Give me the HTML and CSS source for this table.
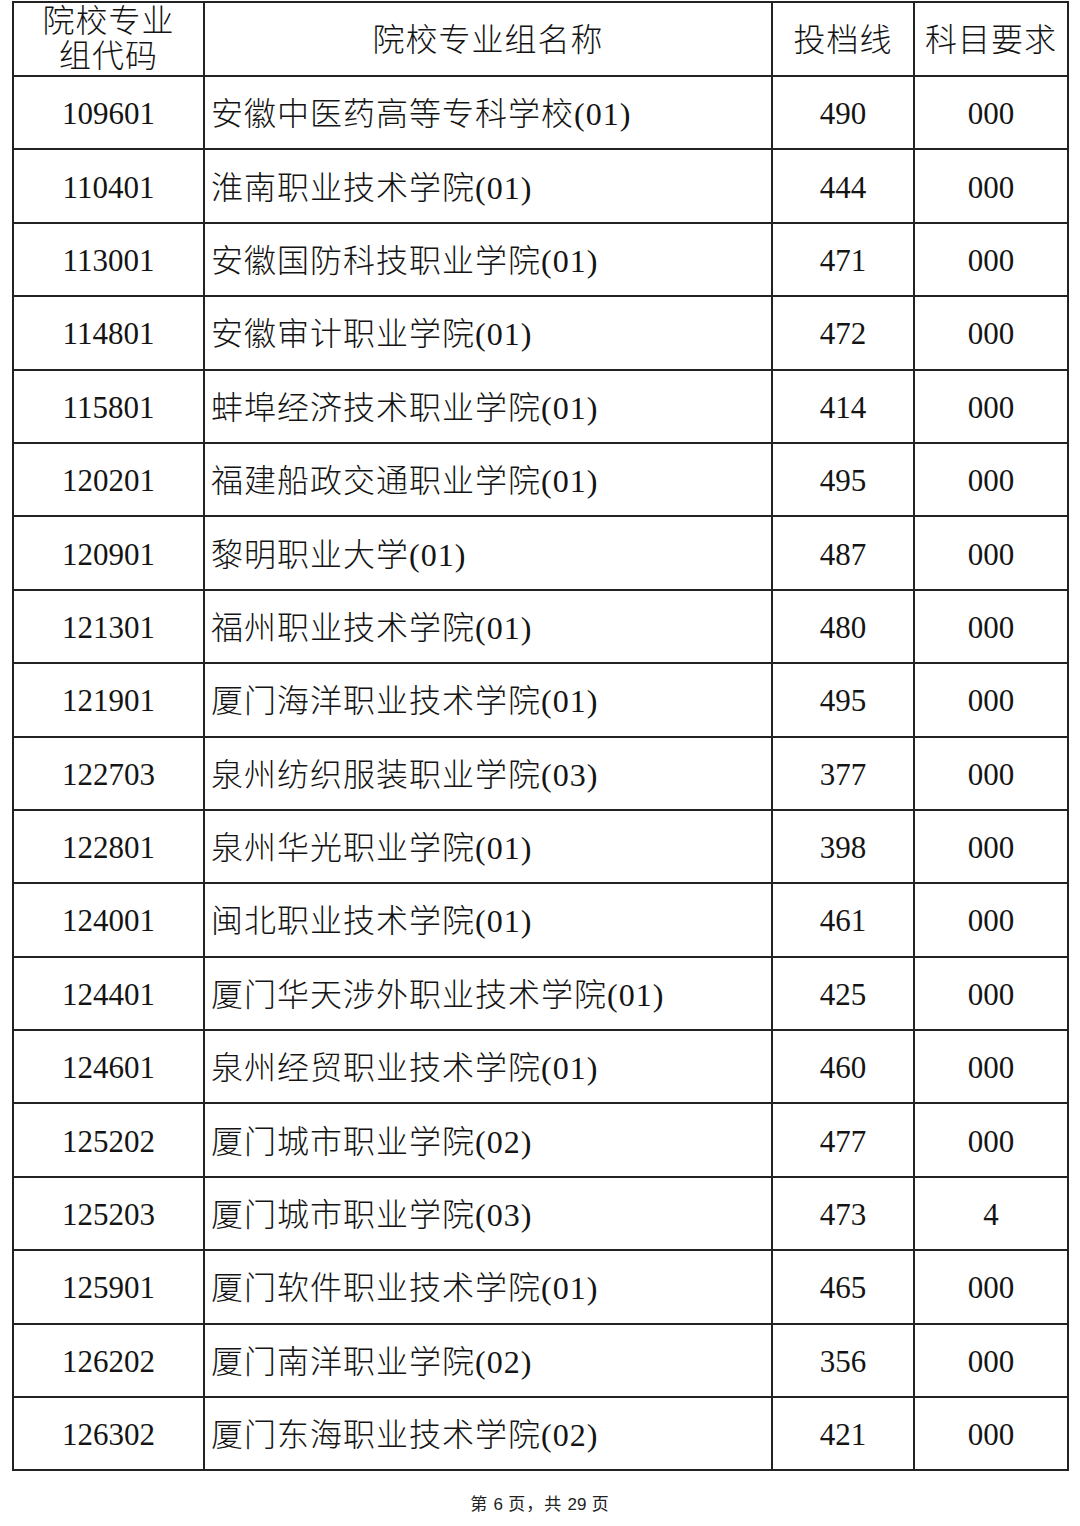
FILE: index.html
```html
<!DOCTYPE html>
<html lang="zh-CN">
<head>
<meta charset="utf-8">
<title>院校专业组投档线</title>
<link rel="stylesheet" href="styles.css">
</head>
<body>
<div class="page">
<table class="grid">
<colgroup>
<col class="c-code"><col class="c-name"><col class="c-score"><col class="c-req">
</colgroup>
<thead>
<tr class="head">
<th class="code-head"><span class="two-line">院校专业<br>组代码</span></th>
<th>院校专业组名称</th>
<th>投档线</th>
<th>科目要求</th>
</tr>
</thead>
<tbody>
<tr><td>109601</td><td class="name">安徽中医药高等专科学校(01)</td><td>490</td><td>000</td></tr>
<tr><td>110401</td><td class="name">淮南职业技术学院(01)</td><td>444</td><td>000</td></tr>
<tr><td>113001</td><td class="name">安徽国防科技职业学院(01)</td><td>471</td><td>000</td></tr>
<tr><td>114801</td><td class="name">安徽审计职业学院(01)</td><td>472</td><td>000</td></tr>
<tr><td>115801</td><td class="name">蚌埠经济技术职业学院(01)</td><td>414</td><td>000</td></tr>
<tr><td>120201</td><td class="name">福建船政交通职业学院(01)</td><td>495</td><td>000</td></tr>
<tr><td>120901</td><td class="name">黎明职业大学(01)</td><td>487</td><td>000</td></tr>
<tr><td>121301</td><td class="name">福州职业技术学院(01)</td><td>480</td><td>000</td></tr>
<tr><td>121901</td><td class="name">厦门海洋职业技术学院(01)</td><td>495</td><td>000</td></tr>
<tr><td>122703</td><td class="name">泉州纺织服装职业学院(03)</td><td>377</td><td>000</td></tr>
<tr><td>122801</td><td class="name">泉州华光职业学院(01)</td><td>398</td><td>000</td></tr>
<tr><td>124001</td><td class="name">闽北职业技术学院(01)</td><td>461</td><td>000</td></tr>
<tr><td>124401</td><td class="name">厦门华天涉外职业技术学院(01)</td><td>425</td><td>000</td></tr>
<tr><td>124601</td><td class="name">泉州经贸职业技术学院(01)</td><td>460</td><td>000</td></tr>
<tr><td>125202</td><td class="name">厦门城市职业学院(02)</td><td>477</td><td>000</td></tr>
<tr><td>125203</td><td class="name">厦门城市职业学院(03)</td><td>473</td><td>4</td></tr>
<tr><td>125901</td><td class="name">厦门软件职业技术学院(01)</td><td>465</td><td>000</td></tr>
<tr><td>126202</td><td class="name">厦门南洋职业学院(02)</td><td>356</td><td>000</td></tr>
<tr><td>126302</td><td class="name">厦门东海职业技术学院(02)</td><td>421</td><td>000</td></tr>
</tbody>
</table>
<p class="footer">第 <span class="num">6</span> 页，共 <span class="num">29</span> 页</p>
</div>
</body>
</html>
```
FILE: styles.css
```css
html, body {
  margin: 0;
  padding: 0;
  background: #ffffff;
}

.page {
  width: 1080px;
  height: 1526px;
  padding: 1px 0 0 12px;
  box-sizing: border-box;
  font-family: "Liberation Serif", "Noto Sans CJK SC", serif;
  font-weight: 300;
  color: #141414;
}

.grid {
  border-collapse: collapse;
  table-layout: fixed;
  width: 1055px;
}

.c-code { width: 191px; }
.c-name { width: 568px; }
.c-score { width: 142px; }
.c-req { width: 154px; }

.grid th,
.grid td {
  border: 2px solid #222222;
  padding: 3px 0 0 0;
  text-align: center;
  vertical-align: middle;
  font-size: 31px;
  font-weight: 300;
  line-height: 36px;
  white-space: nowrap;
  overflow: hidden;
}

.grid th {
  font-size: 32px;
  letter-spacing: 1px;
}

.head {
  height: 74px;
}

.head th {
  padding-top: 2px;
}

.code-head {
  vertical-align: top;
}

.two-line {
  display: block;
  line-height: 35px;
  margin-top: -3px;
}

.grid tbody tr {
  height: 73.4px;
}

.grid td.name {
  text-align: left;
  padding-left: 6px;
  font-size: 32px;
  letter-spacing: 1px;
}

.footer {
  margin: 24px 0 0 -12px;
  text-align: center;
  font-size: 17px;
  line-height: 20px;
  letter-spacing: 1px;
  color: #222222;
  font-weight: 400;
}

.footer .num {
  font-family: "Liberation Sans", sans-serif;
  letter-spacing: 0;
}
```
